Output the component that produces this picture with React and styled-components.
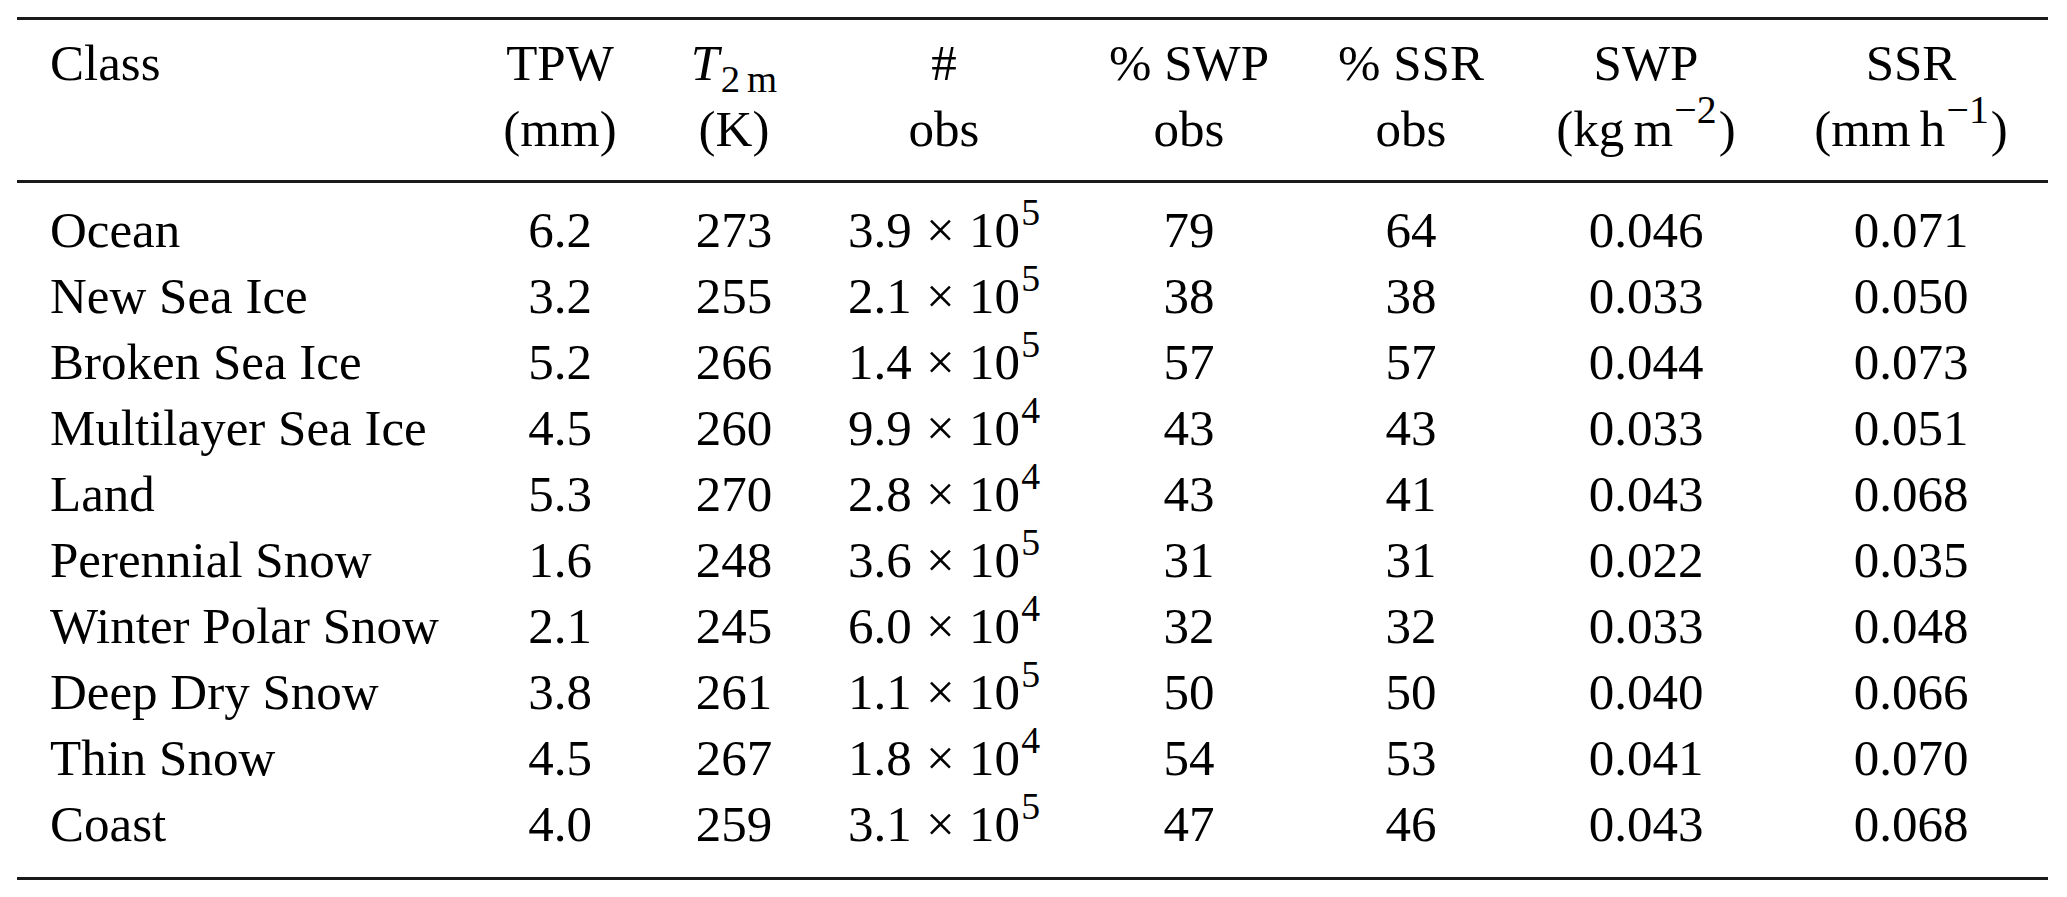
import React from "react";
import styled, { createGlobalStyle } from "styled-components";

const Global = createGlobalStyle`
  html, body { margin: 0; padding: 0; background: #fff; }
  body { font-family: "Liberation Serif", "Times New Roman", serif; color: #000; }
`;

const COLS = "456px 174px 174px 246px 244px 200px 270px 260px";

const Page = styled.div`
  padding: 17px 19px 0 17px;
  width: 2031px;
`;

const Table = styled.div`
  width: 100%;
  font-size: 51px;
  line-height: 66px;
`;

const Head = styled.div`
  display: grid;
  grid-template-columns: ${COLS};
  border-top: 3px solid #1a1a1a;
  border-bottom: 3px solid #1a1a1a;
  padding: 10px 0 18px;
`;

const Body = styled.div`
  border-bottom: 3px solid #1a1a1a;
  padding: 14px 0 20px;
`;

const Row = styled.div`
  display: grid;
  grid-template-columns: ${COLS};
  height: 66px;
`;

const Cell = styled.div`
  text-align: ${(p) => (p.$left ? "left" : "center")};
  padding-left: ${(p) => (p.$left ? "33px" : "0")};
  white-space: nowrap;
`;

const Line = styled.div`
  height: 66px;
`;

const Sup = styled.span`
  font-size: ${(p) => (p.$unit ? "0.78em" : "0.74em")};
  line-height: 0;
  position: relative;
  top: -0.58em;
  margin-left: 0.03em;
  margin-right: ${(p) => (p.$unit ? "0.05em" : "0")};
`;

const Sub = styled.span`
  font-size: 0.76em;
  line-height: 0;
  position: relative;
  top: 0.3em;
  margin-left: 0.04em;
`;

const Ital = styled.i`
  font-style: italic;
`;

const Thin = styled.span`
  margin-left: 0.18em;
`;

const Times = styled.span`
  margin: 0 0.28em;
`;

const rows = [
  ["Ocean", "6.2", "273", "3.9", "5", "79", "64", "0.046", "0.071"],
  ["New Sea Ice", "3.2", "255", "2.1", "5", "38", "38", "0.033", "0.050"],
  ["Broken Sea Ice", "5.2", "266", "1.4", "5", "57", "57", "0.044", "0.073"],
  ["Multilayer Sea Ice", "4.5", "260", "9.9", "4", "43", "43", "0.033", "0.051"],
  ["Land", "5.3", "270", "2.8", "4", "43", "41", "0.043", "0.068"],
  ["Perennial Snow", "1.6", "248", "3.6", "5", "31", "31", "0.022", "0.035"],
  ["Winter Polar Snow", "2.1", "245", "6.0", "4", "32", "32", "0.033", "0.048"],
  ["Deep Dry Snow", "3.8", "261", "1.1", "5", "50", "50", "0.040", "0.066"],
  ["Thin Snow", "4.5", "267", "1.8", "4", "54", "53", "0.041", "0.070"],
  ["Coast", "4.0", "259", "3.1", "5", "47", "46", "0.043", "0.068"],
];

export default function App() {
  return (
    <Page>
      <Global />
      <Table>
        <Head>
          <Cell $left>
            <Line>Class</Line>
          </Cell>
          <Cell>
            <Line>TPW</Line>
            <Line>(mm)</Line>
          </Cell>
          <Cell>
            <Line>
              <Ital>T</Ital>
              <Sub>
                2<Thin>m</Thin>
              </Sub>
            </Line>
            <Line>(K)</Line>
          </Cell>
          <Cell>
            <Line>#</Line>
            <Line>obs</Line>
          </Cell>
          <Cell>
            <Line>% SWP</Line>
            <Line>obs</Line>
          </Cell>
          <Cell>
            <Line>% SSR</Line>
            <Line>obs</Line>
          </Cell>
          <Cell>
            <Line>SWP</Line>
            <Line>
              (kg<Thin>m</Thin>
              <Sup $unit>−2</Sup>)
            </Line>
          </Cell>
          <Cell>
            <Line>SSR</Line>
            <Line>
              (mm<Thin>h</Thin>
              <Sup $unit>−1</Sup>)
            </Line>
          </Cell>
        </Head>
        <Body>
          {rows.map((r) => (
            <Row key={r[0]}>
              <Cell $left>{r[0]}</Cell>
              <Cell>{r[1]}</Cell>
              <Cell>{r[2]}</Cell>
              <Cell>
                {r[3]}
                <Times>×</Times>10<Sup>{r[4]}</Sup>
              </Cell>
              <Cell>{r[5]}</Cell>
              <Cell>{r[6]}</Cell>
              <Cell>{r[7]}</Cell>
              <Cell>{r[8]}</Cell>
            </Row>
          ))}
        </Body>
      </Table>
    </Page>
  );
}
